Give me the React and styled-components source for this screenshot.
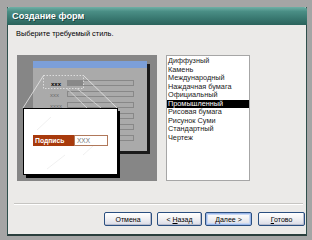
import React from "react";
import styled, { createGlobalStyle } from "styled-components";

const Global = createGlobalStyle`
  html, body {
    margin: 0;
    padding: 0;
    background: #a5a5a5;
    width: 312px;
    height: 240px;
    overflow: hidden;
  }
  body {
    font-family: "Liberation Sans", Arial, sans-serif;
  }
`;

const Window = styled.div`
  margin: 7px 0 0 7px;
  width: 300px;
  height: 229px;
  display: flex;
  flex-direction: column;
  box-sizing: border-box;
  border: 1px solid #2f4f4c;
  border-top: none;
  border-bottom: 2px solid #2a3e3c;
  background: #ebeae8;
`;

const TitleBar = styled.div`
  height: 18px;
  margin: 0 -1px;
  display: flex;
  align-items: center;
  padding-left: 5px;
  background: linear-gradient(
    to bottom,
    #6fb0a6 0%,
    #4a8e85 25%,
    #3a7a72 60%,
    #2b635c 100%
  );
  border-radius: 3px 3px 0 0;
  color: #fff;
  font-size: 9.2px;
  font-weight: bold;
  text-shadow: 1px 1px 0 #1e4440;
`;

const Body = styled.div`
  flex: 1;
  display: flex;
  flex-direction: column;
  padding: 4px 1px 0 8px;
`;

const Prompt = styled.div`
  font-size: 7.4px;
  line-height: 9px;
  color: #000;
`;

const Content = styled.div`
  display: flex;
  gap: 9px;
  margin: 17px 0 0 1px;
  height: 126px;
`;

const Preview = styled.div`
  width: 140px;
  height: 126px;
  background: #868686;
`;

const List = styled.div`
  width: 84px;
  height: 126px;
  box-sizing: border-box;
  background: #fff;
  border: 1px solid #a6a6a6;
  padding-top: 1px;
`;

const Item = styled.div`
  font-size: 7.3px;
  line-height: 8.5px;
  height: 8.5px;
  padding-left: 1px;
  white-space: nowrap;
  color: ${(p) => (p.$selected ? "#fff" : "#222")};
  background: ${(p) => (p.$selected ? "#000" : "transparent")};
`;

const Separator = styled.div`
  margin: 22px 2px 0 -2px;
  height: 1px;
  background: #c6c5c2;
  border-bottom: 1px solid #fff;
`;

const ButtonRow = styled.div`
  display: flex;
  justify-content: flex-end;
  margin-top: 7px;
`;

const Button = styled.button`
  width: ${(p) => p.$w}px;
  height: 14px;
  margin-left: ${(p) => p.$gap}px;
  padding: 0;
  box-sizing: border-box;
  font-family: "Liberation Sans", Arial, sans-serif;
  font-size: 7px;
  color: #000;
  border: 1px solid #2a4f80;
  border-radius: 2px;
  background: linear-gradient(to bottom, #ffffff 0%, #f2f2f4 45%, #d9dbe6 100%);
  box-shadow: ${(p) =>
    p.$default
      ? "inset 0 0 0 1px #9ab6e8, inset 0 0 0 2px #c8d8f4"
      : "inset -1px -1px 0 #b8bccc"};
  u {
    text-decoration: underline;
  }
`;

const styles = [
  "Диффузный",
  "Камень",
  "Международный",
  "Наждачная бумага",
  "Официальный",
  "Промышленный",
  "Рисовая бумага",
  "Рисунок Суми",
  "Стандартный",
  "Чертеж",
];

// rows of the small form; labels only where the magnified card doesn't cover them
const rows = [
  { y: 28, label: "xxx", bold: true },
  { y: 39, label: "xxx" },
  { y: 50, label: "xxxx" },
  { y: 61 },
  { y: 72 },
  { y: 83 },
];

const PreviewArt = () => (
  <svg width="140" height="126" viewBox="0 0 140 126">
    {/* form behind */}
    <rect x="19" y="9" width="114" height="90" fill="#1a1a1a" />
    <rect x="16" y="6" width="114" height="90" fill="#aaaaaa" />
    <rect x="16" y="6" width="114" height="7" fill="#7c9fd8" />
    {rows.map((r) => (
      <g key={r.y}>
        {r.label && (
          <text
            x={r.bold ? 34 : 33}
            y={r.y + 2.5}
            fontSize="6"
            fontFamily="Liberation Sans, Arial, sans-serif"
            fontWeight={r.bold ? "bold" : "normal"}
            fill={r.bold ? "#000" : "#6a6a6a"}
          >
            {r.label}
          </text>
        )}
        <rect
          x="50.5"
          y={r.y - 2.5}
          width="66"
          height="5"
          fill="none"
          stroke="#888"
          strokeWidth="1"
        />
        {r.bold && <rect x="50.5" y={r.y - 2.5} width="16" height="5" fill="#888" />}
      </g>
    ))}
    {/* zoom frame */}
    <rect
      x="26.5"
      y="20.5"
      width="40"
      height="13"
      fill="none"
      stroke="#e8e8e8"
      strokeWidth="0.8"
      strokeDasharray="1.5 1.5"
    />
    <line x1="26.5" y1="20.5" x2="6" y2="53" stroke="#e8e8e8" strokeWidth="0.8" />
    <line x1="66.5" y1="20.5" x2="100" y2="53" stroke="#e8e8e8" strokeWidth="0.8" />
    <line x1="50" y1="33.5" x2="70" y2="53" stroke="#dcdcdc" strokeWidth="0.8" />
    <line x1="60" y1="33.5" x2="84" y2="53" stroke="#dcdcdc" strokeWidth="0.8" />
    {/* magnified card */}
    <rect x="9" y="56" width="94" height="67" fill="#000" />
    <rect x="6.5" y="53.5" width="94" height="66" fill="#fff" stroke="#000" strokeWidth="1" />
    <line x1="20" y1="75" x2="34" y2="62" stroke="#ececec" strokeWidth="0.8" />
    <line x1="30" y1="114" x2="48" y2="100" stroke="#ececec" strokeWidth="0.8" />
    <line x1="66" y1="100" x2="86" y2="82" stroke="#ececec" strokeWidth="0.8" />
    <rect x="16" y="80" width="41" height="11" fill="#a83a0c" />
    <text
      x="18"
      y="88"
      fontSize="6.8"
      fontWeight="bold"
      fontFamily="Liberation Sans, Arial, sans-serif"
      fill="#fff"
    >
      Подпись
    </text>
    <rect x="57.5" y="80.5" width="33" height="10" fill="#fff" stroke="#b0785a" strokeWidth="1" />
    <text
      x="60"
      y="88"
      fontSize="6.5"
      fontFamily="Liberation Sans, Arial, sans-serif"
      fill="#777"
    >
      XXX
    </text>
  </svg>
);

export default function App() {
  return (
    <>
      <Global />
      <Window>
        <TitleBar>Создание форм</TitleBar>
        <Body>
          <Prompt>Выберите требуемый стиль.</Prompt>
          <Content>
            <Preview>
              <PreviewArt />
            </Preview>
            <List>
              {styles.map((s) => (
                <Item key={s} $selected={s === "Промышленный"}>
                  {s}
                </Item>
              ))}
            </List>
          </Content>
          <Separator />
          <ButtonRow>
            <Button $w={48} $gap={0}>Отмена</Button>
            <Button $w={45} $gap={5}>
              &lt; <u>Н</u>азад
            </Button>
            <Button $w={47} $gap={3} $default>
              <u>Д</u>алее &gt;
            </Button>
            <Button $w={47} $gap={6}>
              <u>Г</u>отово
            </Button>
          </ButtonRow>
        </Body>
      </Window>
    </>
  );
}
